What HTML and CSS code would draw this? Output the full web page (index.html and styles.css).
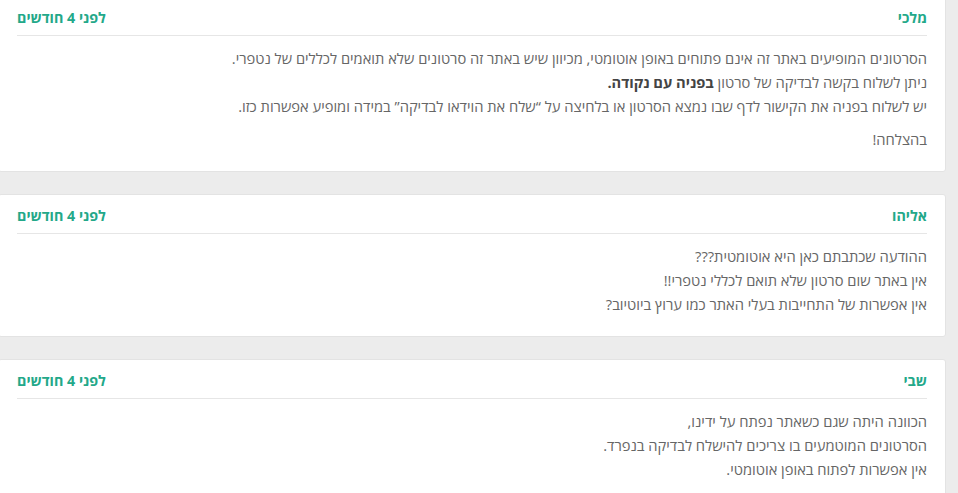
FILE: index.html
```html
<!DOCTYPE html>
<html lang="he" dir="rtl">
<head>
<meta charset="utf-8">
<link rel="stylesheet" href="styles.css">
</head>
<body>
<div class="list">
  <div class="card first">
    <div class="head">
      <span class="name">מלכי</span>
      <span class="time">לפני 4 חודשים</span>
    </div>
    <div class="body">
      <p>הסרטונים המופיעים באתר זה אינם פתוחים באופן אוטומטי, מכיוון שיש באתר זה סרטונים שלא תואמים לכללים של נטפרי.<br>ניתן לשלוח בקשה לבדיקה של סרטון <strong>בפניה עם נקודה.</strong><br>יש לשלוח בפניה את הקישור לדף שבו נמצא הסרטון או בלחיצה על “שלח את הוידאו לבדיקה” במידה ומופיע אפשרות כזו.</p>
      <p>בהצלחה!</p>
    </div>
  </div>
  <div class="card">
    <div class="head">
      <span class="name">אליהו</span>
      <span class="time">לפני 4 חודשים</span>
    </div>
    <div class="body">
      <p>ההודעה שכתבתם כאן היא אוטומטית???<br>אין באתר שום סרטון שלא תואם לכללי נטפרי!!<br>אין אפשרות של התחייבות בעלי האתר כמו ערוץ ביוטיוב?</p>
    </div>
  </div>
  <div class="card">
    <div class="head">
      <span class="name">שבי</span>
      <span class="time">לפני 4 חודשים</span>
    </div>
    <div class="body">
      <p>הכוונה היתה שגם כשאתר נפתח על ידינו,<br>הסרטונים המוטמעים בו צריכים להישלח לבדיקה בנפרד.<br>אין אפשרות לפתוח באופן אוטומטי.</p>
    </div>
  </div>
</div>
</body>
</html>
```
FILE: styles.css
```css
html, body {
  margin: 0;
  padding: 0;
}
body {
  background: #ececec;
  font-family: "Open Sans", "DejaVu Sans", sans-serif;
  font-size: 14.7px;
  color: #666;
  overflow: hidden;
  height: 493px;
}
.list {
  display: flex;
  flex-direction: column;
  gap: 22px;
  width: 948px;
  margin-right: 12px;
  margin-left: -2px;
  margin-top: -4px;
}
.card {
  background: #fff;
  border: 1px solid #e3e3e3;
  border-radius: 3px;
  padding: 0 18px;
}
.head {
  display: flex;
  justify-content: space-between;
  align-items: center;
  padding: 11px 0 7px;
  border-bottom: 1px solid #e6e6e6;
  line-height: 20px;
  font-weight: 700;
  color: #23a889;
  font-size: 14.3px;
}
.body {
  padding: 10px 0 11px;
}
.body p {
  margin: 0 0 9px;
  line-height: 24px;
}
.body strong {
  color: #444;
}
```
